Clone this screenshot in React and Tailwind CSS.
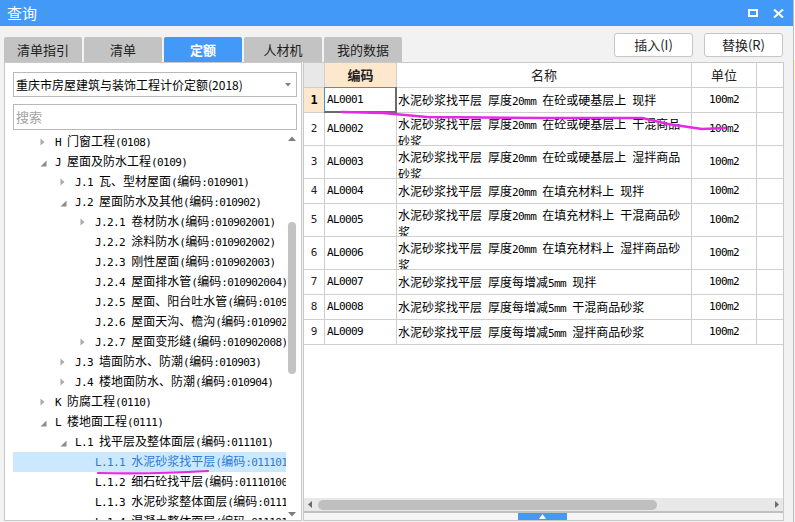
import React from 'react';

const tree = [
  { lv: 0, st: 'c', t: 'H 门窗工程(0108)' },
  { lv: 0, st: 'e', t: 'J 屋面及防水工程(0109)' },
  { lv: 1, st: 'c', t: 'J.1 瓦、型材屋面(编码:010901)' },
  { lv: 1, st: 'e', t: 'J.2 屋面防水及其他(编码:010902)' },
  { lv: 2, st: 'c', t: 'J.2.1 卷材防水(编码:010902001)' },
  { lv: 2, st: '', t: 'J.2.2 涂料防水(编码:010902002)' },
  { lv: 2, st: '', t: 'J.2.3 刚性屋面(编码:010902003)' },
  { lv: 2, st: '', t: 'J.2.4 屋面排水管(编码:010902004)' },
  { lv: 2, st: '', t: 'J.2.5 屋面、阳台吐水管(编码:010902005)' },
  { lv: 2, st: '', t: 'J.2.6 屋面天沟、檐沟(编码:010902006)' },
  { lv: 2, st: 'c', t: 'J.2.7 屋面变形缝(编码:010902008)' },
  { lv: 1, st: 'c', t: 'J.3 墙面防水、防潮(编码:010903)' },
  { lv: 1, st: 'c', t: 'J.4 楼地面防水、防潮(编码:010904)' },
  { lv: 0, st: 'c', t: 'K 防腐工程(0110)' },
  { lv: 0, st: 'e', t: 'L 楼地面工程(0111)' },
  { lv: 1, st: 'e', t: 'L.1 找平层及整体面层(编码:011101)' },
  { lv: 2, st: '', t: 'L.1.1 水泥砂浆找平层(编码:011101001)', sel: true },
  { lv: 2, st: '', t: 'L.1.2 细石砼找平层(编码:011101002)' },
  { lv: 2, st: '', t: 'L.1.3 水泥砂浆整体面层(编码:011101003)' },
  { lv: 2, st: '', t: 'L.1.4 混凝土整体面层(编码:011101004)' },
];

const padByLevel = { 0: 'pl-[27px]', 1: 'pl-[47px]', 2: 'pl-[67px]' };

const rows = [
  { n: 1, code: 'AL0001', name: ['水泥砂浆找平层 厚度20mm 在砼或硬基层上 现拌'] },
  { n: 2, code: 'AL0002', name: ['水泥砂浆找平层 厚度20mm 在砼或硬基层上 干混商品', '砂浆'] },
  { n: 3, code: 'AL0003', name: ['水泥砂浆找平层 厚度20mm 在砼或硬基层上 湿拌商品', '砂浆'] },
  { n: 4, code: 'AL0004', name: ['水泥砂浆找平层 厚度20mm 在填充材料上 现拌'] },
  { n: 5, code: 'AL0005', name: ['水泥砂浆找平层 厚度20mm 在填充材料上 干混商品砂', '浆'] },
  { n: 6, code: 'AL0006', name: ['水泥砂浆找平层 厚度20mm 在填充材料上 湿拌商品砂', '浆'] },
  { n: 7, code: 'AL0007', name: ['水泥砂浆找平层 厚度每增减5mm 现拌'] },
  { n: 8, code: 'AL0008', name: ['水泥砂浆找平层 厚度每增减5mm 干混商品砂浆'] },
  { n: 9, code: 'AL0009', name: ['水泥砂浆找平层 厚度每增减5mm 湿拌商品砂浆'] },
];

// Latin runs rendered in a narrow monospace, like the bitmap font of the original
function Mixed({ text }) {
  const parts = text.split(/([\x20-\x7e]+)/);
  return parts.map((p, i) =>
    /[\x20-\x7e]/.test(p) ? (
      <span key={i} className="font-['DejaVu_Sans_Mono',monospace] text-[11px] tracking-[-0.6px]">
        {p}
      </span>
    ) : (
      <React.Fragment key={i}>{p}</React.Fragment>
    )
  );
}

function Arrow({ st }) {
  if (st === 'c')
    return (
      <svg width="5" height="8" viewBox="0 0 5 8">
        <polygon points="0.5,0.5 4.5,4 0.5,7.5" fill="#a9a9a9" />
      </svg>
    );
  if (st === 'e')
    return (
      <svg width="7" height="7" viewBox="0 0 7 7" className="mt-[3px]">
        <polygon points="6.5,0.5 6.5,6.5 0.5,6.5" fill="#8c8c8c" />
      </svg>
    );
  return null;
}

function Tab({ label, active }) {
  return (
    <div
      className={
        active
          ? 'w-[78px] h-[25px] rounded-t-[2px] bg-[#4399f7] text-white font-bold text-[13px] flex items-center justify-center'
          : 'w-[78px] h-[25px] rounded-t-[2px] bg-[#c3c3c3] text-[#1e1e1e] text-[13px] flex items-center justify-center'
      }
    >
      {label}
    </div>
  );
}

export default function App() {
  return (
    <div className="relative w-[795px] h-[522px] overflow-hidden bg-[#f4f4f4] flex font-['Noto_Sans_CJK_SC',sans-serif]">
      <div className="w-[794px] h-full flex flex-col bg-[#f2f2f2] border-r border-[#bdbdbd]">
        {/* Title bar */}
        <div className="h-[26px] bg-[#4399f7] flex items-center pl-[7px] pr-[8px] shrink-0">
          <div className="text-white text-[15px] leading-[26px]">查询</div>
          <div className="flex-1" />
          <div className="w-[10px] h-[8px] border-2 border-white mr-[15px]" />
          <svg width="11" height="9" viewBox="0 0 11 9" className="mr-[1px]">
            <line x1="1" y1="0.5" x2="10" y2="8.5" stroke="white" strokeWidth="2" />
            <line x1="10" y1="0.5" x2="1" y2="8.5" stroke="white" strokeWidth="2" />
          </svg>
        </div>

        {/* Tabs + buttons */}
        <div className="h-[36px] flex pl-[4px] pr-[10px] shrink-0">
          <div className="flex items-end gap-[2px]">
            <Tab label="清单指引" />
            <Tab label="清单" />
            <Tab label="定额" active />
            <Tab label="人材机" />
            <Tab label="我的数据" />
          </div>
          <div className="flex-1" />
          <div className="flex gap-[11px] mt-[7px]">
            <div className="w-[79px] h-[24px] bg-white border border-[#c6c6c6] rounded-[3px] text-[13px] text-[#222] flex items-center justify-center">
              插入(I)
            </div>
            <div className="w-[79px] h-[24px] bg-white border border-[#c6c6c6] rounded-[3px] text-[13px] text-[#222] flex items-center justify-center">
              替换(R)
            </div>
          </div>
        </div>

        {/* Content */}
        <div className="h-[459px] flex pl-[4px] gap-[1px] shrink-0">
          {/* Left panel */}
          <div className="w-[298px] h-full bg-white border border-[#c9c9c9] flex flex-col pl-[8px] pr-[4px]">
            <div className="mt-[9px] h-[25px] border border-[#b9b9b9] flex items-center pl-[2px] pr-[5px] shrink-0">
              <div className="flex-1 text-[12px] text-black whitespace-nowrap overflow-hidden">
                重庆市房屋建筑与装饰工程计价定额(2018)
              </div>
              <svg width="6" height="4" viewBox="0 0 6 4">
                <polygon points="0,0 6,0 3,3.5" fill="#808080" />
              </svg>
            </div>
            <div className="mt-[7px] h-[26px] border border-[#b9b9b9] flex items-center pl-[2px] shrink-0">
              <div className="text-[13px] text-[#a3a3a3]">搜索</div>
            </div>
            <div className="mt-[2px] flex-1 flex overflow-hidden">
              <div className="w-[273px] h-full overflow-hidden">
                {tree.map((it, i) => (
                  <div
                    key={i}
                    className={
                      'h-[20px] flex items-center whitespace-nowrap ' +
                      padByLevel[it.lv] +
                      (it.sel ? ' bg-[#cce8ff]' : '')
                    }
                  >
                    <div className="w-[15px] h-[20px] flex items-center shrink-0">
                      <Arrow st={it.st} />
                    </div>
                    <span
                      className={
                        it.sel
                          ? 'text-[12px] leading-[20px] text-[#2b7cd6]'
                          : 'text-[12px] leading-[20px] text-black'
                      }
                    >
                      <Mixed text={it.t} />
                    </span>
                  </div>
                ))}
              </div>
              <div className="w-[11px] h-full flex flex-col items-center">
                <div className="h-[12px] flex items-center justify-center shrink-0">
                  <svg width="8" height="5" viewBox="0 0 8 5">
                    <polygon points="0,5 8,5 4,0.5" fill="#7d7d7d" />
                  </svg>
                </div>
                <div className="mt-[78px] w-[8px] h-[152px] rounded-full bg-[#c3c3c3] shrink-0" />
                <div className="flex-1" />
                <div className="h-[12px] flex items-center justify-center shrink-0">
                  <svg width="8" height="5" viewBox="0 0 8 5">
                    <polygon points="0,0 8,0 4,4.5" fill="#7d7d7d" />
                  </svg>
                </div>
              </div>
            </div>
          </div>

          {/* Right panel */}
          <div className="w-[481px] h-full bg-white border border-[#c9c9c9] flex flex-col">
            <div className="flex-1 overflow-hidden">
              {/* header */}
              <div className="h-[25px] flex border-b border-[#cfcfcf] text-[13px] text-[#222]">
                <div className="w-[21px] bg-[#e8e8e8] border-r border-[#cfcfcf]" />
                <div className="w-[72px] bg-[#fde8cd] border-r border-[#cfcfcf] font-bold flex items-center justify-center">
                  编码
                </div>
                <div className="w-[295px] border-r border-[#cfcfcf] flex items-center justify-center">名称</div>
                <div className="w-[65px] border-r border-[#cfcfcf] flex items-center justify-center">单位</div>
                <div className="flex-1" />
              </div>
              {rows.map((r) => {
                const tall = r.name.length > 1;
                return (
                  <div
                    key={r.n}
                    className={
                      (tall ? 'h-[33px]' : 'h-[25px]') + ' flex border-b border-[#cfcfcf] text-black'
                    }
                  >
                    <div
                      className={
                        r.n === 1
                          ? 'w-[21px] bg-[#fde8cd] border-r border-[#cfcfcf] flex items-center justify-center text-[12px] font-bold font-["DejaVu_Sans_Mono",monospace]'
                          : 'w-[21px] border-r border-[#cfcfcf] flex items-center justify-center text-[11px] text-[#222] font-["DejaVu_Sans_Mono",monospace]'
                      }
                    >
                      {r.n}
                    </div>
                    <div className="relative w-[72px] border-r border-[#cfcfcf] flex items-center pl-[2px] text-[11px] tracking-[-0.6px] font-['DejaVu_Sans_Mono',monospace]">
                      {r.code}
                      {r.n === 1 && (
                        <div className="absolute left-[-1px] right-[-1px] top-[-1px] bottom-[-1px] border-t border-l border-r-2 border-b-2 border-t-[#3d8fe6] border-l-[#3d8fe6] border-r-[#6b6b6b] border-b-[#6b6b6b]" />
                      )}
                    </div>
                    <div
                      className={
                        'w-[295px] border-r border-[#cfcfcf] pl-[1px] text-[12px] whitespace-nowrap overflow-hidden flex flex-col ' +
                        (tall ? 'pt-[3px] leading-[15px]' : 'justify-center leading-[15px]')
                      }
                    >
                      {r.name.map((l, i) => (
                        <div key={i}>
                          <Mixed text={l} />
                        </div>
                      ))}
                    </div>
                    <div className="w-[65px] border-r border-[#cfcfcf] flex items-center justify-center text-[11px] tracking-[-0.6px] font-['DejaVu_Sans_Mono',monospace]">
                      100m2
                    </div>
                    <div className="flex-1" />
                  </div>
                );
              })}
            </div>
            {/* horizontal scrollbar */}
            <div className="h-[13px] bg-[#e8e8e8] flex items-center px-[4px] shrink-0">
              <svg width="4" height="7" viewBox="0 0 4 7">
                <polygon points="4,0 4,7 0,3.5" fill="#6a6a6a" />
              </svg>
              <div className="ml-[6px] w-[339px] h-[10px] rounded-full bg-[#bfbfbf]" />
              <div className="flex-1" />
              <svg width="4" height="7" viewBox="0 0 4 7">
                <polygon points="0,0 0,7 4,3.5" fill="#6a6a6a" />
              </svg>
            </div>
            <div className="h-[2px] bg-[#c0c0c0] shrink-0" />
            <div className="h-[7px] bg-[#f5f5f5] flex shrink-0">
              <div className="ml-[214px] w-[49px] h-full bg-[#4399f7] flex items-center justify-center">
                <svg width="7" height="5" viewBox="0 0 7 5">
                  <polygon points="0,5 7,5 3.5,0" fill="white" />
                </svg>
              </div>
            </div>
          </div>
        </div>
      </div>
      <div className="flex-1 flex flex-col">
        <div className="h-[60px] bg-white" />
        <div className="h-[20px] bg-[#fff7c2]" />
        <div className="flex-1 bg-[#f0f0f0]" />
      </div>

      {/* Hand-drawn magenta annotations */}
      <svg className="absolute left-0 top-0 pointer-events-none" width="795" height="522" viewBox="0 0 795 522">
        <path d="M98 473 Q150 474.5 208 471" stroke="#e42ae4" strokeWidth="2.2" fill="none" strokeLinecap="round" />
        <path
          d="M342 112 L383 113 L427 117 L545 118 L642 118 L668 124 L702 129 L725 128"
          stroke="#e42ae4"
          strokeWidth="2.4"
          fill="none"
          strokeLinecap="round"
          strokeLinejoin="round"
        />
      </svg>
    </div>
  );
}
